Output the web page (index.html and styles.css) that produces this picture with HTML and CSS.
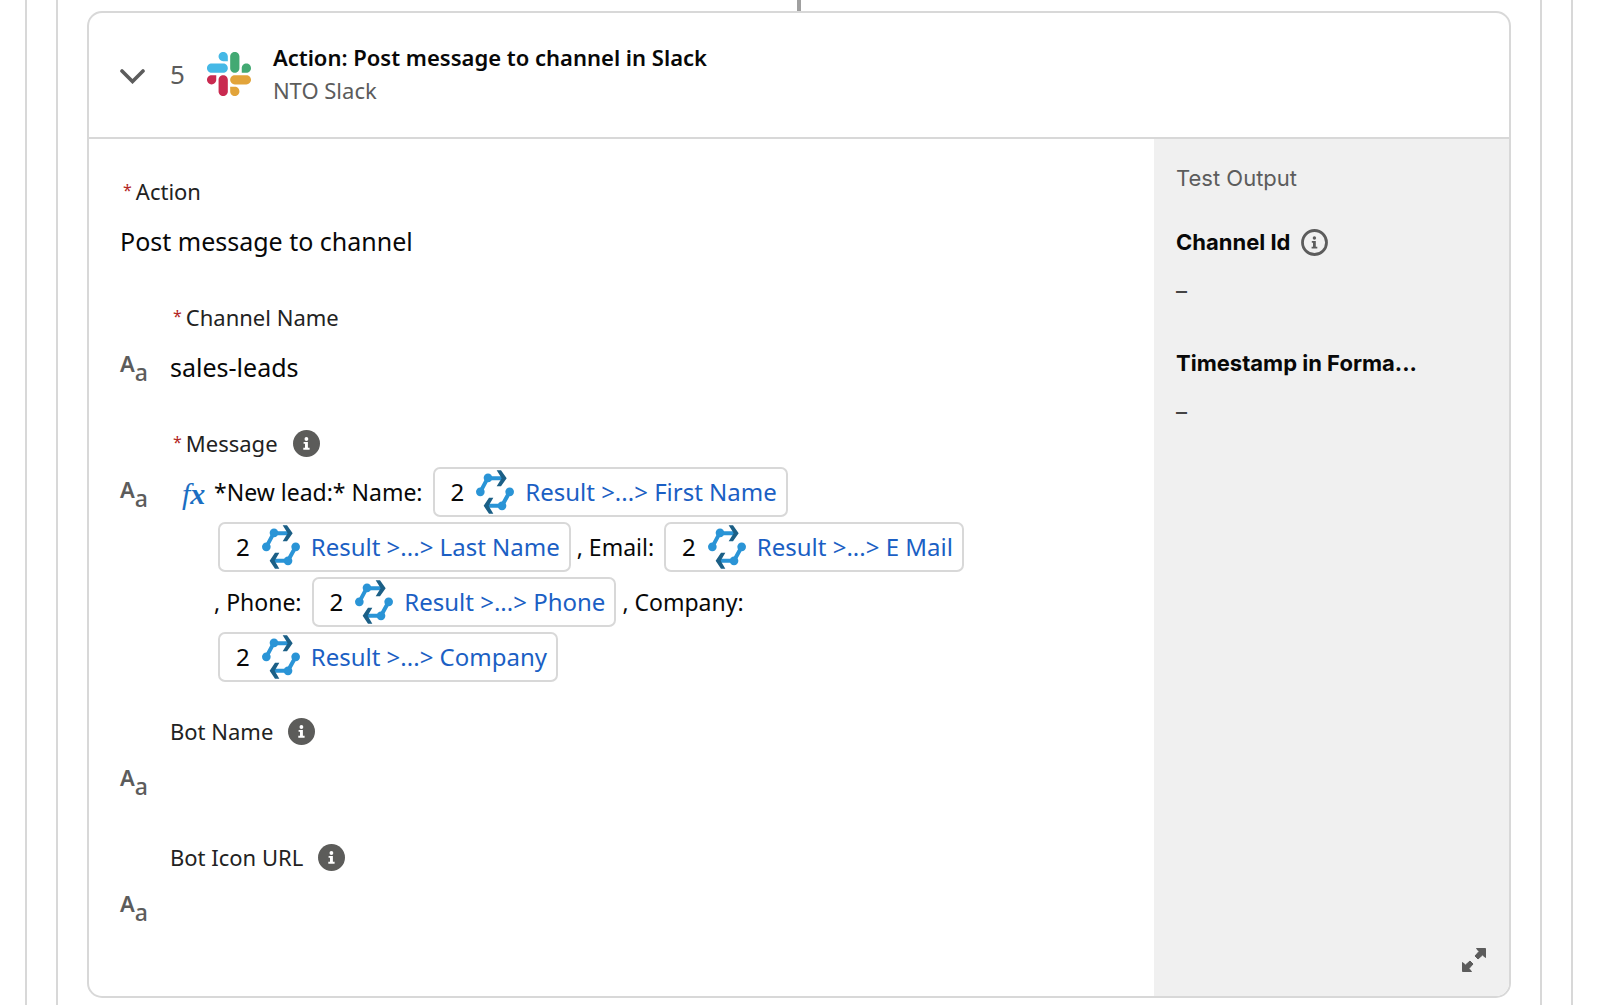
FILE: index.html
```html
<!DOCTYPE html>
<html lang="en">
<head>
  <meta charset="UTF-8">
  <meta name="viewport" content="width=device-width, initial-scale=1.0">
  <title>Action: Post message to channel in Slack</title>
  <link rel="stylesheet" href="styles.css">
</head>
<body>
<!-- Shared icons -->
<svg class="sprite" aria-hidden="true">
  <symbol id="icon-loop" viewBox="0 0 114 131">
    <g fill="none" stroke="#2a94d6" stroke-width="12">
      <path d="M13 65L35 24H82"/>
      <path d="M101 65L78 107H32"/>
    </g>
    <g fill="#2a94d6">
      <circle cx="36" cy="23" r="13"/>
      <circle cx="13" cy="65" r="13"/>
      <circle cx="101" cy="65" r="13"/>
      <circle cx="78" cy="107" r="13"/>
    </g>
    <g fill="#1b5f86">
      <path d="M62 0h13l17 24-17 24H62l15-24z"/>
      <path d="M52 83H39l-16 24 16 24h13l-14-24z"/>
    </g>
  </symbol>
  <symbol id="icon-info" viewBox="0 0 27 27">
    <circle cx="13.5" cy="13.5" r="13.5" fill="#5c5c5a"/>
    <circle cx="13.4" cy="9" r="1.9" fill="#fff"/>
    <path d="M10.6 12h4.3v5.8h1.7v1.9h-6.3v-1.9H12v-4h-1.4z" fill="#fff"/>
  </symbol>
  <symbol id="icon-info-outline" viewBox="0 0 27 27">
    <circle cx="13.5" cy="13.5" r="12" fill="none" stroke="#5c5c5c" stroke-width="2.8"/>
    <circle cx="13.4" cy="9" r="1.7" fill="#5c5c5c"/>
    <path d="M10.8 12h4v5.8h1.5v1.7h-5.7v-1.7H12v-4h-1.2z" fill="#5c5c5c"/>
  </symbol>
</svg>

<div class="frame">
  <div class="frame">
    <div class="connector"></div>

    <section class="card">
      <header class="card-header">
        <button type="button" class="toggle" aria-label="Collapse step">
          <svg width="25" height="18" viewBox="0 0 25 18" fill="none" stroke="#5c5c5c" stroke-width="3.6" stroke-linecap="round"><path d="M2 5l10.500 10.500L23 5"/></svg>
        </button>
        <span class="step-number">5</span>
        <svg class="slack-logo" viewBox="0 0 122.8 122.8">
          <path fill="#c92a50" d="M25.8 77.6c0 7.1-5.800 12.900-12.900 12.900S0 84.700 0 77.600s5.800-12.900 12.900-12.900h12.900v12.900zM32.300 77.600c0-7.100 5.800-12.900 12.900-12.900s12.900 5.800 12.900 12.900v32.300c0 7.100-5.800 12.900-12.900 12.900s-12.900-5.800-12.900-12.900V77.600z"/>
          <path fill="#45b8e6" d="M45.200 25.800c-7.100 0-12.900-5.800-12.900-12.900S38.100 0 45.200 0s12.900 5.800 12.900 12.900v12.900H45.200zM45.200 32.300c7.100 0 12.900 5.800 12.900 12.900s-5.800 12.900-12.900 12.900H12.900C5.800 58.100 0 52.300 0 45.200s5.800-12.900 12.900-12.900h32.300z"/>
          <path fill="#42a973" d="M97 45.200c0-7.100 5.800-12.900 12.900-12.900s12.900 5.800 12.900 12.900-5.800 12.900-12.900 12.900H97V45.200zM90.500 45.200c0 7.100-5.800 12.900-12.900 12.900s-12.900-5.800-12.900-12.900V12.900C64.700 5.800 70.500 0 77.600 0s12.900 5.800 12.900 12.900v32.300z"/>
          <path fill="#e2a43a" d="M77.600 97c7.100 0 12.900 5.800 12.900 12.900s-5.800 12.900-12.900 12.900-12.900-5.800-12.900-12.900V97h12.900zM77.600 90.500c-7.100 0-12.900-5.800-12.900-12.900s5.800-12.900 12.900-12.900h32.300c7.100 0 12.900 5.800 12.900 12.900s-5.800 12.900-12.900 12.900H77.600z"/>
        </svg>
        <div class="card-title">
          <h2>Action: Post message to channel in Slack</h2>
          <p>NTO Slack</p>
        </div>
      </header>

      <div class="card-body">
        <form class="fields">
          <div class="field field-wide">
            <label for="action" class="required">Action</label>
            <input type="text" id="action" name="action" value="Post message to channel">
          </div>

          <div class="field">
            <label for="channelName" class="required">Channel Name</label>
            <span class="type-icon">A<sub>a</sub></span>
            <input type="text" id="channelName" name="channelName" value="sales-leads">
          </div>

          <div class="field field-message">
            <div class="label-row">
              <span id="messageLabel" class="required">Message</span>
              <svg class="info-icon"><use href="#icon-info"/></svg>
            </div>
            <span class="type-icon">A<sub>a</sub></span>
            <div class="formula" role="group" aria-labelledby="messageLabel">
              <span class="fx-icon">f<b>x</b></span>
              <div class="message">
                <span>*New lead:* Name:</span>
                <span class="chip">2<svg><use href="#icon-loop"/></svg><a href="#">Result &gt;...&gt; First Name</a></span>
                <span class="chip">2<svg><use href="#icon-loop"/></svg><a href="#">Result &gt;...&gt; Last Name</a></span>
                <span>, Email:</span>
                <span class="chip">2<svg><use href="#icon-loop"/></svg><a href="#">Result &gt;...&gt; E Mail</a></span>
                <span>, Phone:</span>
                <span class="chip">2<svg><use href="#icon-loop"/></svg><a href="#">Result &gt;...&gt; Phone</a></span>
                <span>, Company:</span>
                <span class="chip">2<svg><use href="#icon-loop"/></svg><a href="#">Result &gt;...&gt; Company</a></span>
              </div>
            </div>
          </div>

          <div class="field">
            <div class="label-row">
              <label for="botName">Bot Name</label>
              <svg class="info-icon"><use href="#icon-info"/></svg>
            </div>
            <span class="type-icon">A<sub>a</sub></span>
            <input type="text" id="botName" name="botName">
          </div>

          <div class="field">
            <div class="label-row">
              <label for="botIcon">Bot Icon URL</label>
              <svg class="info-icon"><use href="#icon-info"/></svg>
            </div>
            <span class="type-icon">A<sub>a</sub></span>
            <input type="text" id="botIcon" name="botIcon">
          </div>
        </form>

        <aside class="output">
          <h3>Test Output</h3>
          <dl>
            <dt>Channel Id <svg class="info-icon"><use href="#icon-info-outline"/></svg></dt>
            <dd>–</dd>
            <dt>Timestamp in Forma...</dt>
            <dd>–</dd>
          </dl>
          <button type="button" class="expand" aria-label="Expand output">
            <svg width="24" height="24" viewBox="0 0 24 24" fill="#5c5c5c" stroke="#5c5c5c" stroke-linejoin="round">
              <path d="M14.500 .5h9v9l-3-2.500-4.500 4-3-3 4-4.500z"/>
              <path d="M9.500 23.500h-9v-9l3 2.500 4.500-4 3 3-4 4.500z"/>
            </svg>
          </button>
        </aside>
      </div>
    </section>
  </div>
</div>
</body>
</html>
```

FILE: styles.css
```css
* {
  box-sizing: border-box;
}

body {
  margin: 0;
  padding: 0 27px 0 25px;
  font-family: "Noto Sans", "Open Sans", sans-serif;
  font-size: 25px;
  color: #080808;
  background-color: #fff;
}

h2, h3, p, dl, dd {
  margin: 0;
}

button {
  padding: 0;
  border: none;
  background: none;
  cursor: pointer;
}

svg {
  display: block;
  flex-shrink: 0;
}

.sprite {
  position: absolute;
  width: 0;
  height: 0;
}

/* Nested step frames */
.frame {
  min-height: 100vh;
  padding: 0 29px;
  border: solid #d8d8d8;
  border-width: 0 2px;
}

.connector {
  width: 4px;
  height: 11px;
  margin: 0 auto;
  background-color: #a0a0a0;
}

.card {
  border: 2px solid #d8d8d8;
  border-radius: 15px;
  overflow: hidden;
}

/* Header */
.card-header {
  display: flex;
  align-items: center;
  padding: 28px 31px 30px;
  border-bottom: 2px solid #d8d8d8;
}

.toggle {
  padding-top: 2px;
}

.step-number {
  margin: 0 22px 0 25px;
  font-size: 26px;
  color: #5c5c5c;
}

.slack-logo {
  width: 44px;
  height: 44px;
  margin-right: 22px;
}

.card-title h2,
.card-title p {
  font-size: 22px;
  line-height: 33px;
}

.card-title h2 {
  font-weight: 600;
}

.card-title p {
  color: #5c5c5c;
}

/* Fields */
.card-body {
  display: flex;
}

.fields {
  flex: 1;
  min-width: 0;
  padding: 37px 31px 28px;
}

.field {
  display: grid;
  grid-template-columns: 50px 1fr;
  row-gap: 10px;
  margin-bottom: 36px;
}

.field-wide {
  grid-template-columns: 1fr;
}

.field label,
.label-row {
  grid-column: -2;
  font-size: 22px;
  line-height: 30px;
  color: #222;
}

.label-row {
  display: flex;
  align-items: center;
  gap: 15px;
}

.required::before {
  content: "*";
  margin: 0 4px 0 3px;
  font-size: 16px;
  line-height: 1;
  vertical-align: 4px;
  color: #b3261e;
}

.field input {
  width: 100%;
  height: 50px;
  padding: 0;
  border: none;
  outline: none;
  font: inherit;
  color: inherit;
  background: none;
}

/* Text type marker */
.type-icon {
  padding-top: 6px;
  font-size: 22px;
  font-weight: 600;
  line-height: 30px;
  color: #5c5c5c;
}

.type-icon sub {
  font-size: 23px;
  font-weight: 500;
  line-height: 0;
  vertical-align: -9px;
}

.info-icon {
  width: 27px;
  height: 27px;
}

.field-message {
  row-gap: 7px;
  margin-bottom: 31px;
}

.field-message .type-icon {
  padding-top: 9px;
}

.formula {
  display: flex;
  padding: 0 80px 0 10px;
}

.fx-icon {
  flex: 0 0 34px;
  padding-left: 2px;
  font-family: "Liberation Serif", serif;
  font-size: 30px;
  font-style: italic;
  line-height: 58px;
  color: #1b6ec2;
}

.message {
  font-size: 23px;
  line-height: 55px;
}

.message span {
  white-space: nowrap;
}

.message .chip {
  display: inline-flex;
  align-items: center;
  height: 50px;
  margin-left: 4px;
  padding: 0 9px 0 16px;
  border: 2px solid #d8d8d8;
  border-radius: 7px;
  font-size: 24px;
}

.chip svg {
  width: 38px;
  height: 44px;
  margin: 0 11px 0 12px;
}

.chip a {
  color: #1b5fc4;
  text-decoration: none;
}

/* Test output */
.output {
  display: flex;
  flex: 0 0 25%;
  flex-direction: column;
  padding: 24px 23px 24px 22px;
  font-family: Inter, sans-serif;
  font-size: 22px;
  line-height: 30px;
  background-color: #f0f0f0;
}

.output h3 {
  margin-bottom: 34px;
  font-size: 22px;
  font-weight: 400;
  color: #5c5c5c;
}

.output dt {
  display: flex;
  align-items: center;
  gap: 11px;
  font-weight: 700;
}

.output dd {
  margin: 19px 0 42px;
  font-weight: 500;
  color: #444;
}

.expand {
  align-self: flex-end;
  margin-top: auto;
}
```
